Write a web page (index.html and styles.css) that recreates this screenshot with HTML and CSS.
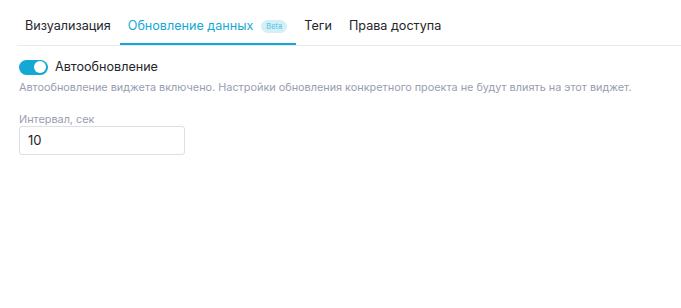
FILE: index.html
```html
<!DOCTYPE html>
<html lang="ru">
<head>
<meta charset="utf-8">
<link rel="stylesheet" href="styles.css">
</head>
<body>
<div class="page">
  <nav class="tabs">
    <div class="tab">Визуализация</div>
    <div class="tab active">Обновление данных <span class="badge">Beta</span></div>
    <div class="tab">Теги</div>
    <div class="tab">Права доступа</div>
  </nav>
  <section class="content">
    <label class="switch-row">
      <span class="switch"><span class="knob"></span></span>
      <span class="switch-label">Автообновление</span>
    </label>
    <p class="hint">Автообновление виджета включено. Настройки обновления конкретного проекта не будут влиять на этот виджет.</p>
    <div class="field">
      <div class="field-label">Интервал, сек</div>
      <div class="input">10</div>
    </div>
  </section>
</div>
</body>
</html>
```
FILE: styles.css
```css
* { box-sizing: border-box; }
html, body { margin: 0; padding: 0; background: #fff; }
body {
  font-family: Inter, "Noto Sans", sans-serif;
  color: #23252b;
  width: 681px;
  height: 308px;
  overflow: hidden;
}
.page { padding-left: 17px; }
.tabs {
  display: flex;
  height: 46px;
  border-bottom: 1px solid #ebebef;
}
.tab {
  display: flex;
  align-items: flex-start;
  height: 45px;
  padding: 18px 9px 9px 8px;
  font-size: 12.6px;
  line-height: 16px;
  color: #23252b;
  border-bottom: 2px solid transparent;
  white-space: nowrap;
}
.tab.active {
  color: #14a9d4;
  border-bottom-color: #14a9d4;
  padding-right: 9px;
}
.badge {
  display: inline-flex;
  align-items: center;
  height: 13px;
  margin-left: 8px;
  margin-top: 2px;
  padding: 0 5px;
  border-radius: 7px;
  background: #d3f0f8;
  color: #52c1df;
  font-size: 7.5px;
  line-height: 13px;
}
.content { padding: 13px 2px 0; }
.switch-row {
  display: flex;
  align-items: center;
  height: 16px;
  gap: 7px;
}
.switch {
  position: relative;
  width: 29px;
  height: 15px;
  border-radius: 8px;
  background: #14a9d4;
}
.knob {
  position: absolute;
  right: 2px;
  top: 1.5px;
  width: 12px;
  height: 12px;
  border-radius: 50%;
  background: #fff;
}
.switch-label { font-size: 12.6px; line-height: 16px; }
.hint {
  margin: 5px 0 0;
  font-size: 10.85px;
  line-height: 14px;
  color: #989db2;
}
.field { margin-top: 18px; }
.field-label {
  font-size: 10.85px;
  line-height: 14px;
  color: #989db2;
}
.input {
  width: 166px;
  height: 29px;
  border: 1px solid #dcdee8;
  border-radius: 3px;
  padding: 0 8px;
  font-size: 13px;
  line-height: 27px;
  color: #23252b;
}
```
